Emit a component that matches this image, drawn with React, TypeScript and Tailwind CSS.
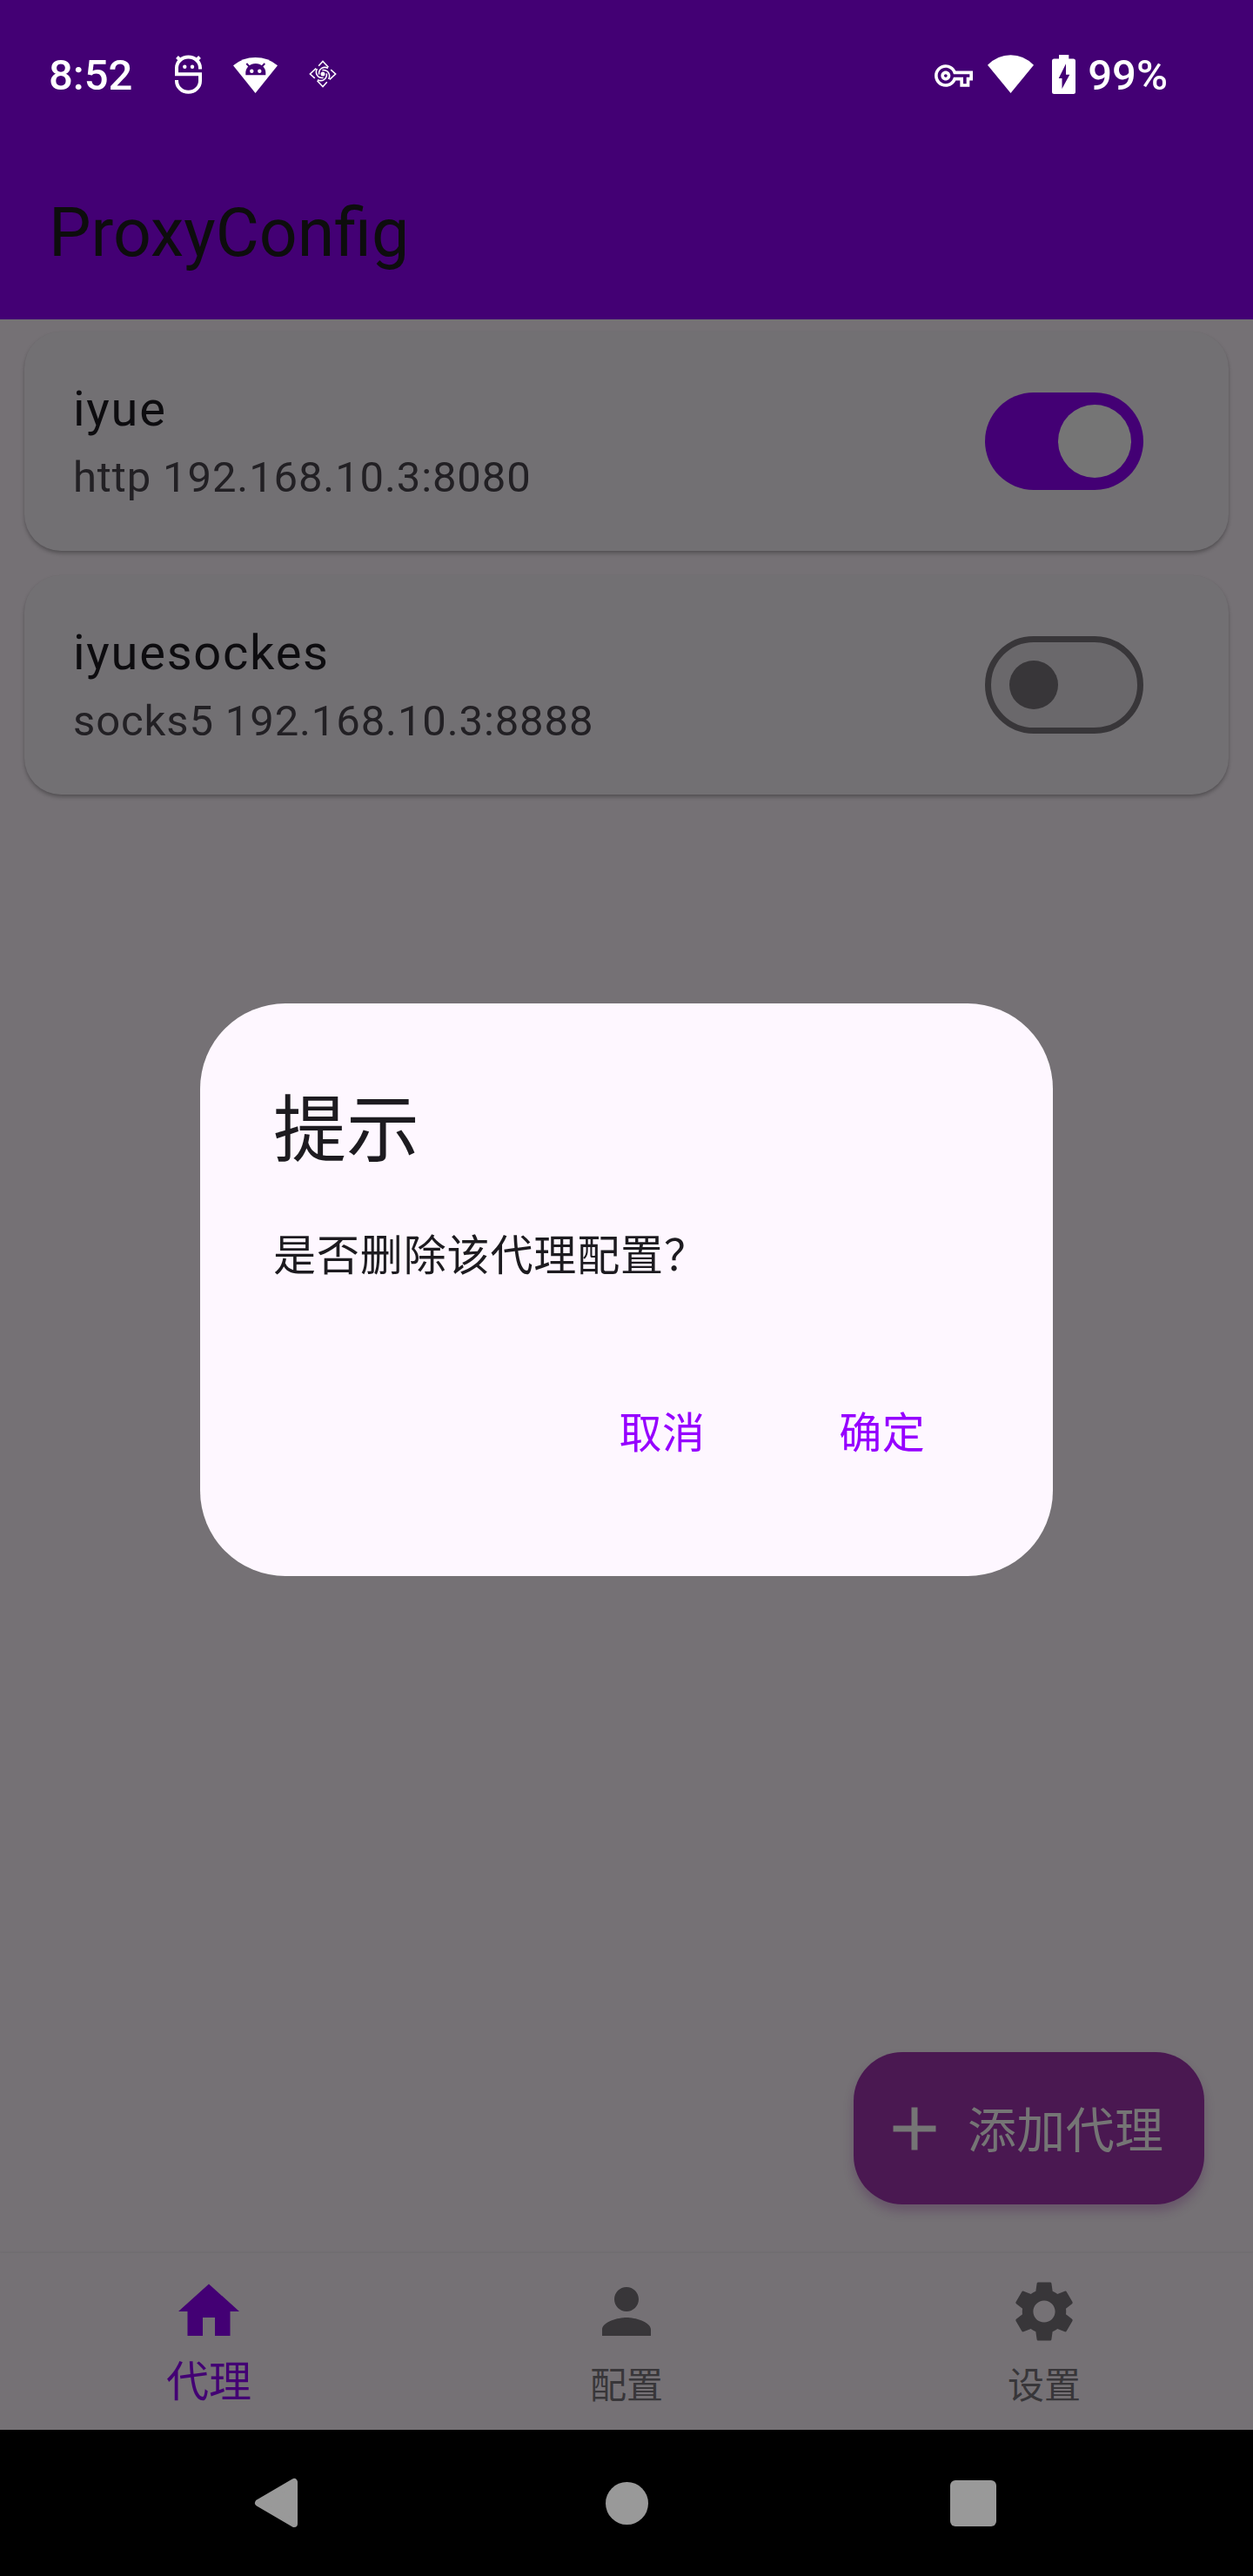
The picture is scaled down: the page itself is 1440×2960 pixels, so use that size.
import type { ReactNode } from "react";
import { MdAdd, MdHome, MdOutlineVpnKey, MdPerson, MdSettings } from "react-icons/md";

function DebugIcon() {
  return (
    <svg width="31" height="45" viewBox="0 0 31 45" fill="none" stroke="white" strokeWidth="4">
      <path d="M29 16.5V15A13.5 12.4 0 0 0 2 15V22.3H29V30A13.5 12.8 0 0 1 2 30V29" />
      <path d="M2.5 2.5L7 7M28.5 2.5L24 7" />
      <circle cx="11.3" cy="13.7" r="2.2" fill="white" stroke="none" />
      <circle cx="20" cy="13.7" r="2.2" fill="white" stroke="none" />
    </svg>
  );
}

function AndroidWifiIcon() {
  return (
    <svg width="51" height="41" viewBox="0 0 51 41">
      <path d="M0 9.3Q11 0 25.5 0T51 9.3L25.5 41Z" fill="white" />
      <path d="M14.3 20.3V17.5A11.5 10.6 0 0 1 37.3 17.5V20.3Z" fill="#430074" />
      <path d="M15.3 7L19.5 11.5M36.3 7L32 11.5" stroke="#430074" strokeWidth="2" />
      <circle cx="21.3" cy="15.7" r="2.2" fill="white" />
      <circle cx="30.3" cy="15.7" r="2.2" fill="white" />
    </svg>
  );
}

function SwirlIcon() {
  return (
    <svg width="32" height="32" viewBox="0 0 32 32" fill="none" stroke="white" strokeWidth="1.6">
      {[0, 90, 180, 270].map((a) => (
        <g key={a} transform={`rotate(${a} 16 16)`}>
          <path d="M11.2 6.8L16 1.4L22.4 8.2" />
          <path d="M22 9.3C17 6.9 11 9.6 11.6 16.6" />
        </g>
      ))}
      <circle cx="16" cy="16" r="2.5" fill="white" stroke="none" />
    </svg>
  );
}

function WifiIcon() {
  return (
    <svg width="53" height="44" viewBox="0 0 53 44">
      <path d="M0 11.7Q11.5 0.3 26.5 0.3T53 11.7L26.5 44Z" fill="white" />
    </svg>
  );
}

function BatteryIcon() {
  return (
    <svg width="27" height="45" viewBox="0 0 27 45">
      <path
        fillRule="evenodd"
        fill="white"
        d="M8 0H19.3V4.5H24.5A2.5 2.5 0 0 1 27 7V42.5A2.5 2.5 0 0 1 24.5 45H2.5A2.5 2.5 0 0 1 0 42.5V7A2.5 2.5 0 0 1 2.5 4.5H8ZM16 10.3L7.7 27H11.5V39L20.3 22.7H16Z"
      />
    </svg>
  );
}

function StatusBar() {
  return (
    <div className="flex h-[168px] items-center pt-[6px] pr-[98px] pl-[56px] text-[49px] leading-[58px] font-medium text-white">
      <span className="w-[145px]">8:52</span>
      <div className="flex items-center pb-1">
        <DebugIcon />
        <div className="ml-9 pt-[2px]">
          <AndroidWifiIcon />
        </div>
        <div className="ml-9">
          <SwirlIcon />
        </div>
      </div>
      <div className="ml-auto flex items-center">
        <MdOutlineVpnKey className="size-[44px] text-white" />
        <div className="ml-[17px] flex items-center pb-1">
          <WifiIcon />
          <div className="ml-[21px]">
            <BatteryIcon />
          </div>
        </div>
        <span className="ml-[14px]">99%</span>
      </div>
    </div>
  );
}

function Switch({ on }: { on: boolean }) {
  return on ? (
    <div className="flex h-[112px] w-[182px] items-center justify-end rounded-full bg-[#430074] pr-[14px]">
      <div className="size-[84px] rounded-full bg-[#757575]" />
    </div>
  ) : (
    <div className="flex h-[112px] w-[182px] items-center rounded-full border-[7px] border-[#383639] bg-[#6a686b] pl-[21px]">
      <div className="size-[56px] rounded-full bg-[#383639]" />
    </div>
  );
}

function ProxyCard({ name, address, on }: { name: string; address: string; on: boolean }) {
  return (
    <div className="flex h-[252px] items-center justify-between rounded-[42px] bg-[#727073] pr-[98px] pl-[56px] shadow-[0_3px_4px_rgba(0,0,0,0.26),0_1px_2px_rgba(0,0,0,0.04)]">
      <div className="pt-1">
        <div className="text-[56px] leading-[80px] tracking-[1.75px] text-[#0d0c0f]">{name}</div>
        <div className="text-[49px] leading-[78px] tracking-[0.875px] text-[#222024]">{address}</div>
      </div>
      <Switch on={on} />
    </div>
  );
}

function NavItem({ icon, label, active }: { icon: ReactNode; label: string; active?: boolean }) {
  return (
    <div
      className={
        active
          ? "flex flex-1 flex-col items-center pt-[25px] text-[49px] leading-[79px] text-[#430074]"
          : "flex flex-1 flex-col items-center pt-[25px] text-[42px] leading-[87px] text-[#383639]"
      }
    >
      {icon}
      <span>{label}</span>
    </div>
  );
}

function SystemNav() {
  return (
    <div className="flex h-[168px] items-center justify-center bg-black">
      <div className="flex w-[398px] justify-center">
        <svg width="84" height="84" viewBox="0 0 84 84">
          <path d="M17 42L58 18V66Z" fill="#999" stroke="#999" strokeWidth="8" strokeLinejoin="round" />
        </svg>
      </div>
      <div className="flex w-[398px] justify-center">
        <div className="size-[49px] rounded-full bg-[#999]" />
      </div>
      <div className="flex w-[398px] justify-center">
        <div className="size-[53px] rounded-[6px] bg-[#999]" />
      </div>
    </div>
  );
}

export default function App() {
  return (
    <div className="relative flex h-[2960px] w-[1440px] flex-col overflow-hidden bg-[#757175] font-[Roboto,'Noto_Sans_CJK_SC',sans-serif]">
      <header className="h-[367px] bg-[#430074]">
        <StatusBar />
        <h1 className="flex h-[199px] items-center pl-[56px] text-[77px] leading-[98px] text-[#0d0d0d]">ProxyConfig</h1>
      </header>

      <main className="relative flex flex-1 flex-col gap-7 px-7 pt-[14px]">
        <ProxyCard name="iyue" address="http 192.168.10.3:8080" on />
        <ProxyCard name="iyuesockes" address="socks5 192.168.10.3:8888" on={false} />
        <button className="absolute right-[56px] bottom-[56px] flex h-[175px] w-[403px] items-center rounded-[56px] bg-[#4a1851] pl-7 text-[#757575] shadow-[0_8px_12px_rgba(74,24,81,0.3)]">
          <MdAdd className="size-[84px]" />
          <span className="ml-[19px] pt-[6px] text-[56px] leading-[70px] tracking-[0.35px]">添加代理</span>
        </button>
      </main>

      <nav className="flex h-[203px] bg-[#757175] shadow-[0_-1px_3px_rgba(0,0,0,0.06)]">
        <NavItem active icon={<MdHome className="size-[84px]" />} label="代理" />
        <NavItem icon={<MdPerson className="size-[84px]" />} label="配置" />
        <NavItem icon={<MdSettings className="size-[84px]" />} label="设置" />
      </nav>

      <SystemNav />

      <div className="absolute inset-0 flex items-center justify-center pt-[171px] pb-[168px]">
        <div role="dialog" className="h-[658px] w-[980px] rounded-[98px] bg-[#fef7ff] p-[84px] text-[#1d1b20]">
          <h2 className="text-[84px] leading-[125px]">提示</h2>
          <p className="mt-[47px] text-[49px] leading-[70px] tracking-[0.875px]">是否删除该代理配置？</p>
          <div className="mt-[99px] flex justify-end gap-7 text-[49px] leading-[140px] tracking-[0.35px] text-[#9600ff]">
            <button className="px-[63px]">取消</button>
            <button className="px-[63px]">确定</button>
          </div>
        </div>
      </div>
    </div>
  );
}
